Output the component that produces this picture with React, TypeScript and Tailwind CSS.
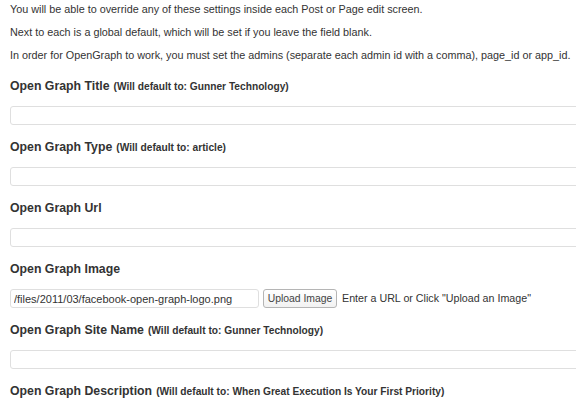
const FONT = "font-['Liberation_Sans',Arial,sans-serif]";

type Field = {
  label: string;
  hint?: string;
  image?: boolean;
};

const FIELDS: Field[] = [
  { label: "Open Graph Title", hint: "(Will default to: Gunner Technology)" },
  { label: "Open Graph Type", hint: "(Will default to: article)" },
  { label: "Open Graph Url" },
  { label: "Open Graph Image", image: true },
  { label: "Open Graph Site Name", hint: "(Will default to: Gunner Technology)" },
  { label: "Open Graph Description", hint: "(Will default to: When Great Execution Is Your First Priority)" },
];

function Heading({ label, hint }: { label: string; hint?: string }) {
  return (
    <h3 className="h-[20px] leading-[20px] whitespace-nowrap text-[#333]">
      <span className="text-[12.3px] font-bold">{label}</span>
      {hint && <span className="ml-[4px] text-[10.2px] font-bold">{hint}</span>}
    </h3>
  );
}

export default function App() {
  return (
    <div className={`w-full h-[411px] overflow-hidden bg-white pl-[10px] pt-[2px] text-[#333] ${FONT}`}>
      {/* Intro */}
      <div className="flex flex-col gap-[8px] text-[10.8px] leading-[15px] whitespace-nowrap">
        <p>You will be able to override any of these settings inside each Post or Page edit screen.</p>
        <p>Next to each is a global default, which will be set if you leave the field blank.</p>
        <p>In order for OpenGraph to work, you must set the admins (separate each admin id with a comma), page_id or app_id.</p>
      </div>

      {/* Fields */}
      <div className="pt-[12px] flex flex-col">
        {FIELDS.map((f) => (
          <div key={f.label} className="flex flex-col mb-[11px]">
            <Heading label={f.label} hint={f.hint} />
            {f.image ? (
              <div className="mt-[11px] flex items-center whitespace-nowrap">
                <input
                  type="text"
                  readOnly
                  value="/files/2011/03/facebook-open-graph-logo.png"
                  className="h-[19px] w-[249px] shrink-0 rounded-[3px] border border-[#dfdfdf] bg-white px-[3px] text-[11px] text-[#333] outline-none"
                />
                <button className="ml-[4px] h-[19px] w-[74px] shrink-0 rounded-[3px] border border-[#b5b5b5] bg-gradient-to-b from-white to-[#f2f2f2] text-[10.4px] text-[#444]">
                  Upload Image
                </button>
                <span className="ml-[5px] text-[10.7px]">Enter a URL or Click "Upload an Image"</span>
              </div>
            ) : (
              <input
                type="text"
                readOnly
                className="mt-[11px] h-[19px] w-[620px] shrink-0 rounded-[3px] border border-[#dfdfdf] bg-white outline-none"
              />
            )}
          </div>
        ))}
      </div>
    </div>
  );
}
